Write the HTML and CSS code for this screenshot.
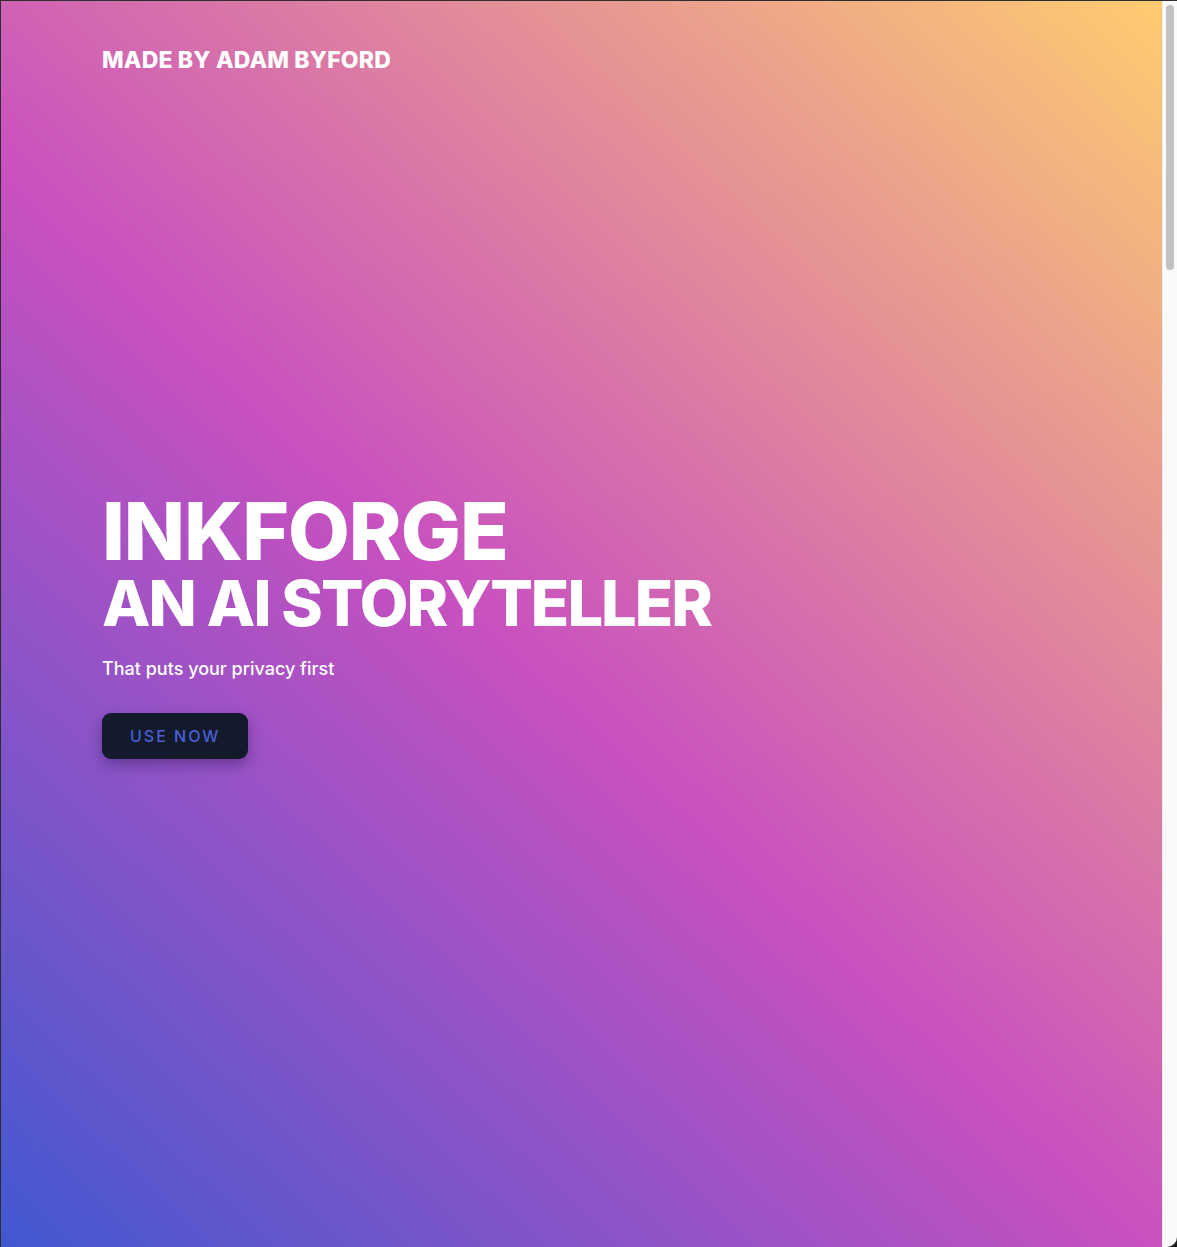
FILE: index.html
```html
<!DOCTYPE html>
<html lang="en">
<head>
<meta charset="utf-8">
<title>InkForge - An AI Storyteller</title>
<link rel="stylesheet" href="styles.css">
</head>
<body>
<div class="window">
  <div class="page">
    <section class="hero">
      <header class="site-header">
        <a class="brand" href="#">MADE BY ADAM BYFORD</a>
      </header>
      <div class="hero-body">
        <div class="hero-text">
          <h1 class="title">INKFORGE<br><span class="subtitle">AN AI STORYTELLER</span></h1>
          <p class="tagline">That puts your privacy first</p>
          <a class="cta" href="#">USE NOW</a>
        </div>
      </div>
    </section>
  </div>
  <div class="scrollbar" aria-hidden="true">
    <div class="thumb"></div>
  </div>
</div>
</body>
</html>
```
FILE: styles.css
```css
* { box-sizing: border-box; }
html, body { margin: 0; padding: 0; height: 100%; overflow: hidden; }
body {
  font-family: "Inter", "Lato", sans-serif;
  background: #1c1c1c;
  color: #fff;
}
.window {
  height: 100%;
  display: flex;
  border-top: 1px solid #2e2e2e;
  border-left: 1px solid #2e2e2e;
  border-bottom-right-radius: 10px;
  overflow: hidden;
}
.page {
  flex: 1;
  min-width: 0;
  overflow: hidden;
  background: #131a2c;
}
.scrollbar {
  width: 15px;
  flex: none;
  background: #fafafa;
  border-left: 1px solid #ececec;
  padding: 4px 3px 0 3px;
}
.thumb {
  width: 8px;
  height: 265px;
  border-radius: 4px;
  background: #c1c1c1;
}
.hero {
  height: 100%;
  display: flex;
  flex-direction: column;
  background-image: linear-gradient(43deg, #4158D0 0%, #C850C0 46%, #FFCC70 100%);
  padding: 0 101px;
}
.site-header {
  padding-top: 44px;
}
.brand {
  color: #fff;
  text-decoration: none;
  font-weight: 800;
  font-size: 23px;
  letter-spacing: 0.15px;
  line-height: 30px;
}
.hero-body {
  flex: 1;
  display: flex;
  align-items: center;
  padding-bottom: 73px;
}
.title {
  margin: 0;
  font-size: 80px;
  font-weight: 800;
  line-height: 80px;
  letter-spacing: -1px;
}
.subtitle {
  display: block;
  font-size: 63px;
  line-height: 64px;
  letter-spacing: -1.9px;
}
.tagline {
  margin: 23px 0 34px;
  font-size: 18px;
  font-weight: 500;
}
.cta {
  display: inline-block;
  background: #131a2c;
  color: #4a5fd6;
  text-decoration: none;
  font-size: 16px;
  font-weight: 500;
  letter-spacing: 2px;
  padding: 13px 28px;
  border-radius: 9px;
  box-shadow: 0 6px 14px rgba(20, 10, 60, 0.35);
}
```
